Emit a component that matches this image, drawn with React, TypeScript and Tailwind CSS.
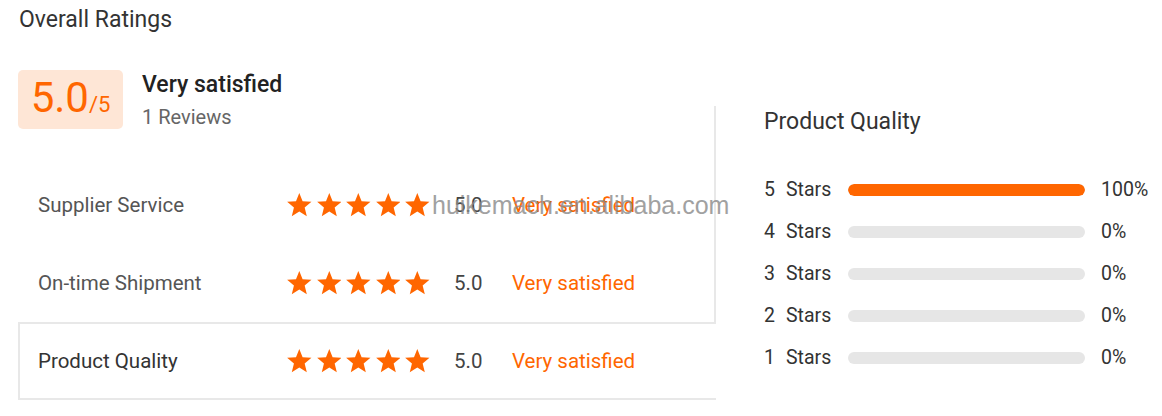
import React from "react";

function starPoints(R: number, ratio: number, cx: number, cy: number) {
  const pts: string[] = [];
  for (let k = 0; k < 10; k++) {
    const a = ((-90 + 36 * k) * Math.PI) / 180;
    const r = k % 2 === 0 ? R : R * ratio;
    pts.push(`${(cx + r * Math.cos(a)).toFixed(2)},${(cy + r * Math.sin(a)).toFixed(2)}`);
  }
  return pts.join(" ");
}

const STAR = starPoints(12.8, 0.44, 12.3, 12.8);

function Stars() {
  return (
    <div className="flex gap-[5px]">
      {[0, 1, 2, 3, 4].map((i) => (
        <svg key={i} width="24.6" height="23.5" viewBox="0 0 24.6 23.5">
          <polygon points={STAR} fill="#ff6600" />
        </svg>
      ))}
    </div>
  );
}

function Row({ label, selected }: { label: string; selected?: boolean }) {
  return (
    <div
      className={
        "ml-[18px] w-[698px] h-[78px] flex items-center border-2 border-r-0 " +
        (selected ? "border-[#e8e8e8] bg-white" : "border-transparent")
      }
    >
      <div
        className={
          "w-[267px] pl-[18px] text-[20.5px] " + (selected ? "text-[#333]" : "text-[#555]")
        }
      >
        {label}
      </div>
      <Stars />
      <div className="w-[24px]" />
      <div className="w-[58px] text-[20.5px] text-[#444]">5.0</div>
      <div className="text-[20.5px] text-[#ff6600]">Very satisfied</div>
    </div>
  );
}

function Bar({ n, pct }: { n: number; pct: number }) {
  return (
    <div className="h-[42px] flex items-center text-[19.5px] text-[#333]">
      <span className="w-[22px]">{n}</span>
      <span className="w-[62px]">Stars</span>
      <div className="w-[237px] h-[12px] rounded-full bg-[#e6e6e6] overflow-hidden">
        <div className="h-full rounded-full bg-[#ff6600]" style={{ width: `${pct}%` }} />
      </div>
      <span className="ml-[16px]">{pct}%</span>
    </div>
  );
}

export default function App() {
  return (
    <div className="relative w-[1162px] h-[416px] bg-white overflow-hidden font-['Roboto',sans-serif]">
      <div className="pl-[19px] pt-[6px] text-[23px] leading-[28px] text-[#333]">Overall Ratings</div>
      <div className="flex items-start mt-[36px]">
        <div className="w-[716px] flex flex-col">
          <div className="flex items-start h-[59px] pl-[18px]">
            <div className="w-[105px] h-[59px] rounded-[5px] bg-[#fee6d6] flex items-baseline justify-center pt-[3px] text-[#ff6600]">
              <span className="text-[42px] leading-[50px]">5.0</span>
              <span className="text-[22px]">/5</span>
            </div>
            <div className="ml-[19px] flex flex-col">
              <div className="text-[23px] leading-[28px] font-medium text-[#222] mt-[1px]">Very satisfied</div>
              <div className="text-[20px] leading-[28px] text-[#666] mt-[4px]">1 Reviews</div>
            </div>
          </div>
          <div className="mt-[37px] flex flex-col">
            <Row label="Supplier Service" />
            <Row label="On-time Shipment" />
            <Row label="Product Quality" selected />
          </div>
        </div>
        <div className="ml-[-2px] mt-[36px] h-[216px] border-l-2 border-[#e8e8e8] pl-[48px] flex flex-col">
          <div className="text-[23px] leading-[28px] text-[#333] mt-[2px]">Product Quality</div>
          <div className="mt-[33px] flex flex-col">
            <Bar n={5} pct={100} />
            <Bar n={4} pct={0} />
            <Bar n={3} pct={0} />
            <Bar n={2} pct={0} />
            <Bar n={1} pct={0} />
          </div>
        </div>
      </div>
      <div className="absolute left-[432px] top-[190px] text-[25px] leading-[30px] text-[#8a8a8a] opacity-80 font-['Liberation_Sans',sans-serif] pointer-events-none">
        huikemach.en.alibaba.com
      </div>
    </div>
  );
}
